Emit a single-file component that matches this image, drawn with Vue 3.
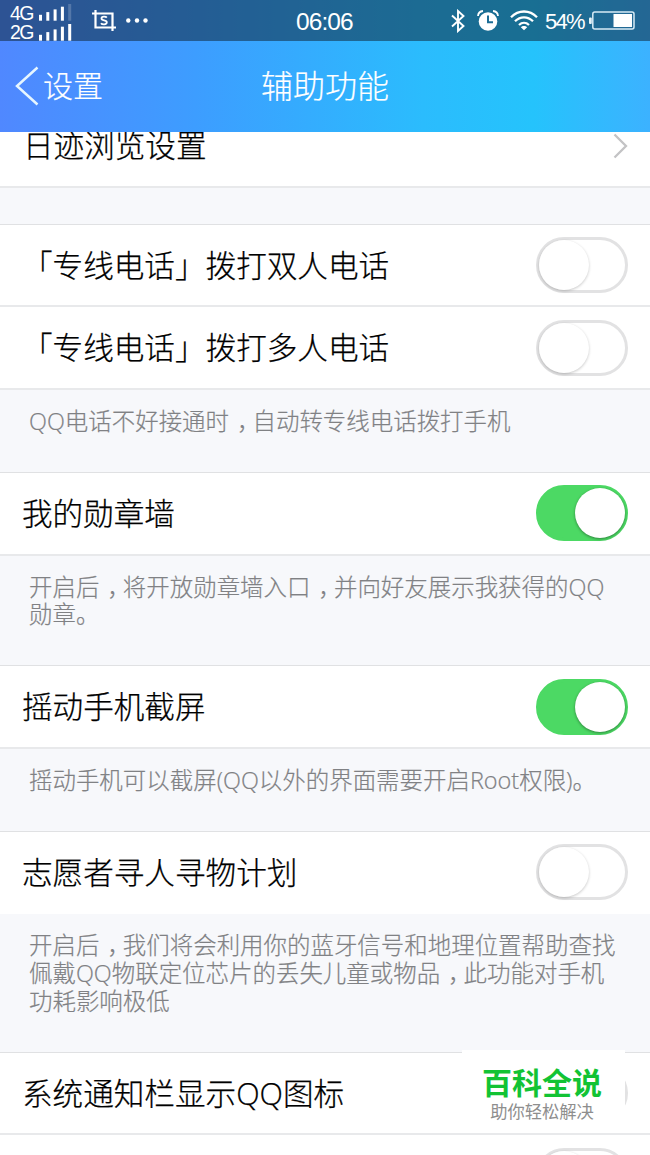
<template>
  <div class="screen">
    <header class="top">
      <div class="status-bar">
        <div class="sims">
          <div v-for="sim in sims" :key="sim.name" class="sim">
            <span class="sim-name">{{ sim.name }}</span>
            <svg class="signal" width="33" height="18" viewBox="0 0 33 18">
              <rect
                v-for="n in 5"
                :key="n"
                :x="(n - 1) * 7.3"
                :y="14.5 - n * 2.7"
                width="3"
                :height="3.2 + n * 2.7"
                fill="#fff"
                :opacity="n > sim.bars ? 0.2 : 1"
              />
            </svg>
          </div>
        </div>
        <svg class="capture" width="24" height="22" viewBox="0 0 24 22">
          <path d="M0 3.5H20.5V21M3.5 0V17.5H24" fill="none" stroke="#fff" stroke-width="2.2" />
          <path
            d="M14.8 7.6C14 6.5 9.5 6 9.5 8.5C9.5 11 14.8 9.8 14.8 12.3C14.8 15 10 14.7 9 13.2"
            fill="none"
            stroke="#fff"
            stroke-width="1.8"
          />
        </svg>
        <svg class="dots" width="22" height="5" viewBox="0 0 22 5">
          <circle v-for="x in [2.3, 11, 19.5]" :key="x" :cx="x" cy="2.5" r="2.2" fill="#fff" />
        </svg>
        <span class="time">06:06</span>
        <svg class="bluetooth" width="14" height="24" viewBox="0 0 14 24">
          <path d="M1 6.5L12.5 17L7 22V2L12.5 7L1 17.5" fill="none" stroke="#fff" stroke-width="1.9" />
        </svg>
        <svg class="alarm" width="22" height="22" viewBox="0 0 22 22">
          <circle cx="11" cy="11.5" r="9.3" fill="#fff" />
          <path d="M1 6C1.2 3 3 1.3 6 1M21 6C20.8 3 19 1.3 16 1" fill="none" stroke="#fff" stroke-width="1.8" />
          <path d="M11 5.5V12.3H16" fill="none" stroke="#1c6d96" stroke-width="2" />
        </svg>
        <svg class="wifi" width="28" height="21" viewBox="0 0 28 21">
          <g fill="none" stroke="#fff" stroke-width="2.3">
            <path d="M1 7.2C8.5 -.4 19.5 -.4 27 7.2" />
            <path d="M5 11.2C10.3 6 17.7 6 23 11.2" />
            <path d="M9 15C12 12.2 16 12.2 19 15" />
          </g>
          <path d="M10.8 17.2C12.5 15.5 15.5 15.5 17.2 17.2L14 20.3Z" fill="#fff" />
        </svg>
        <span class="percent">54%</span>
        <svg class="battery" width="46" height="19" viewBox="0 0 46 19">
          <rect x="3.8" y="1" width="41.2" height="17" rx="2" fill="none" stroke="#d6eaf5" stroke-width="1.5" />
          <rect x="0" y="6.5" width="2.8" height="6.5" rx="1" fill="#e4f2f8" />
          <rect x="24.5" y="3" width="18.5" height="13" fill="#fff" />
        </svg>
      </div>
      <nav class="nav-bar">
        <div class="back">
          <svg width="24" height="40" viewBox="0 0 24 40">
            <path d="M22.5 1.5L2 20L22.5 38.5" fill="none" stroke="#e6f6ff" stroke-width="2.5" />
          </svg>
          <span>设置</span>
        </div>
        <h1 class="title">辅助功能</h1>
      </nav>
    </header>

    <main class="list">
      <template v-for="(item, index) in items" :key="index">
        <div class="row" :class="{ plain: item.plain }">
          <span class="label" :class="{ first: index === 0 }">{{ item.label }}</span>
          <svg v-if="item.link" class="arrow" width="15" height="26" viewBox="0 0 15 26">
            <path d="M1.5 1.5L13 13L1.5 24.5" fill="none" stroke="#c3c3c5" stroke-width="2.3" />
          </svg>
          <button v-else class="switch" :class="{ on: item.on }" @click="item.on = !item.on">
            <span class="knob"></span>
          </button>
        </div>
        <div v-if="item.gap" class="note gap"></div>
        <div v-if="item.note" class="note">
          <p v-for="line in item.note" :key="line">
            <template v-for="(part, i) in line.split('，')" :key="i"><span v-if="i" class="comma">，</span>{{ part }}</template>
          </p>
        </div>
      </template>
    </main>

    <div class="brand">
      <strong>百科全说</strong>
      <span>助你轻松解决</span>
    </div>
  </div>
</template>

<script setup>
import { ref } from 'vue';

const sims = [
  { name: '4G', bars: 4 },
  { name: '2G', bars: 5 },
];

const items = ref([
  { label: '日迹浏览设置', link: true, gap: true },
  { label: '「专线电话」拨打双人电话', on: false },
  {
    label: '「专线电话」拨打多人电话',
    on: false,
    note: ['QQ电话不好接通时，自动转专线电话拨打手机'],
  },
  {
    label: '我的勋章墙',
    on: true,
    note: ['开启后，将开放勋章墙入口，并向好友展示我获得的QQ', '勋章。'],
  },
  {
    label: '摇动手机截屏',
    on: true,
    note: ['摇动手机可以截屏(QQ以外的界面需要开启Root权限)。'],
  },
  {
    label: '志愿者寻人寻物计划',
    on: false,
    plain: true,
    note: [
      '开启后，我们将会利用你的蓝牙信号和地理位置帮助查找',
      '佩戴QQ物联定位芯片的丢失儿童或物品，此功能对手机',
      '功耗影响极低',
    ],
  },
  { label: '系统通知栏显示QQ图标', on: false },
  { label: '', on: false },
]);
</script>

<style>
body {
  margin: 0;
}
</style>

<style scoped>
.screen {
  position: relative;
  width: 650px;
  height: 1155px;
  overflow: hidden;
  background: #fff;
  font-family: 'Open Sans', 'Noto Sans CJK SC', sans-serif;
  font-weight: 300;
}

.top {
  position: relative;
  z-index: 1;
  height: 131.5px;
  color: #fff;
  background: linear-gradient(90deg, #5088ff 0%, #3d9dff 30%, #2bbcfd 65%, #25c3fc 82%, #3cb2ff 100%);
}

/* Status bar */
.status-bar {
  display: flex;
  align-items: center;
  box-sizing: border-box;
  height: 41px;
  padding-left: 10px;
  background: rgba(16, 35, 52, 0.53);
  font-family: 'Liberation Sans', sans-serif;
  font-weight: 400;
  white-space: nowrap;
}

.status-bar svg {
  flex: none;
}

.sims {
  width: 62px;
  padding-top: 3px;
}

.sim {
  display: flex;
  align-items: center;
  height: 19.5px;
}

.sim-name {
  width: 29.5px;
  padding-top: 2px;
  font-size: 19.5px;
  letter-spacing: -1.5px;
  line-height: 19px;
}

.capture {
  margin-left: 20px;
}

.dots {
  margin-left: 10px;
}

.time {
  width: 58px;
  margin: 2px 0 0 148px;
  font-size: 24.5px;
  letter-spacing: -0.9px;
}

.bluetooth {
  margin-left: 97px;
}

.alarm {
  margin-left: 12px;
}

.wifi {
  margin-left: 11px;
}

.percent {
  width: 41px;
  margin: 2px 0 0 7px;
  font-size: 22px;
  letter-spacing: -1.7px;
}

.battery {
  margin-left: 3px;
}

/* Navigation */
.nav-bar {
  display: grid;
  grid-template-columns: 1fr auto 1fr;
  align-items: center;
  height: 90px;
}

.back {
  display: flex;
  align-items: center;
  padding-left: 15px;
  font-size: 30px;
  gap: 4px;
}

.back span,
.title {
  padding-bottom: 4px;
  -webkit-text-stroke: 0.2px #fff;
}

.title {
  margin: 0;
  font-size: 32px;
  font-weight: 300;
}

/* Settings */
.list {
  margin-top: -26.2px;
}

.row {
  display: flex;
  align-items: center;
  justify-content: space-between;
  box-sizing: border-box;
  height: 82.5px;
  padding: 0 22px;
  border-bottom: 2px solid #e8e9eb;
}

.row.plain {
  height: 82.2px;
  border-bottom-color: #fff;
}

.label {
  padding-bottom: 1px;
  color: #000;
  font-size: 30.6px;
  line-height: 40px;
  white-space: nowrap;
  -webkit-text-stroke: 0.25px #000;
}

.label.first {
  padding-left: 1px;
}

.arrow {
  margin-top: 1px;
}

.switch {
  position: relative;
  box-sizing: border-box;
  width: 92px;
  height: 56px;
  padding: 0;
  border: 3px solid #e2e2e3;
  border-radius: 28px;
  background: #fff;
}

.knob {
  position: absolute;
  top: 0;
  left: 0;
  width: 50px;
  height: 50px;
  border-radius: 50%;
  background: #fff;
  box-shadow: 0 1px 3px rgba(0, 0, 0, 0.22);
}

.switch.on {
  border-color: #4cd964;
  background: #4cd964;
}

.switch.on .knob {
  left: 36px;
  box-shadow: 0 1px 3px rgba(0, 0, 0, 0.4);
}

.note {
  box-sizing: border-box;
  padding: 18px 0 36.7px 29px;
  border-bottom: 1px solid #e0e1e3;
  background: #f7f8fb;
  color: #808184;
  font-size: 23.46px;
  line-height: 27.6px;
  white-space: nowrap;
  -webkit-text-stroke: 0.2px #808184;
}

.note p {
  height: 27.6px;
  margin: 0;
}

.note.gap {
  height: 37px;
  padding: 0;
}

/* Half-width comma centred in a full-width cell */
.comma {
  display: inline-block;
  width: 1em;
  text-align: center;
  text-indent: 4px;
  font-feature-settings: 'halt';
}

/* Brand label in the corner */
.brand {
  position: absolute;
  left: 462px;
  top: 1050px;
  display: flex;
  flex-direction: column;
  align-items: center;
  box-sizing: border-box;
  width: 163px;
  height: 83px;
  padding: 16px 3px 0 0;
  background: #fff;
}

.brand strong {
  color: #12c334;
  font-size: 30px;
  font-weight: 700;
  line-height: 34px;
}

.brand span {
  color: #8e8e8e;
  font-size: 17.3px;
  font-weight: 400;
  line-height: 23px;
}
</style>
